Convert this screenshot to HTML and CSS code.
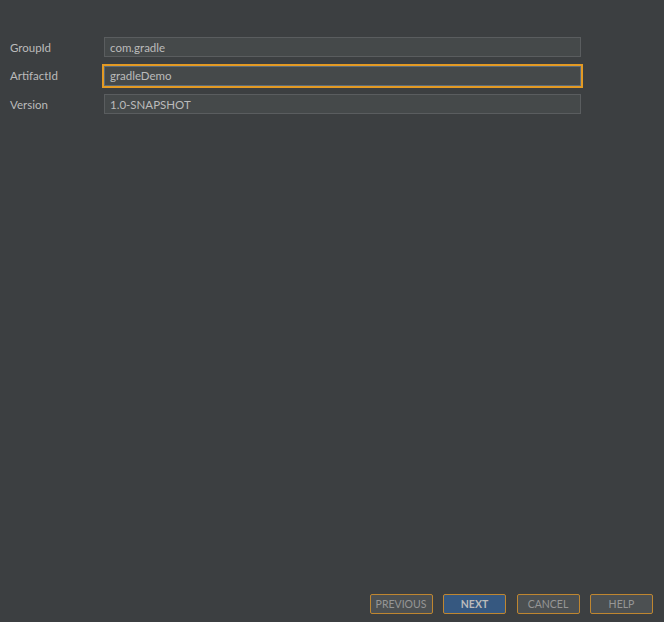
FILE: index.html
```html
<!DOCTYPE html>
<html>
<head>
<meta charset="utf-8">
<link rel="stylesheet" href="styles.css">
</head>
<body>
<div class="page">
  <div class="form">
    <label class="label">GroupId</label>
    <div class="field">com.gradle</div>
    <label class="label">ArtifactId</label>
    <div class="field focused">gradleDemo</div>
    <label class="label">Version</label>
    <div class="field">1.0-SNAPSHOT</div>
  </div>
  <div class="buttons">
    <button class="btn">PREVIOUS</button>
    <button class="btn primary">NEXT</button>
    <button class="btn">CANCEL</button>
    <button class="btn">HELP</button>
  </div>
</div>
</body>
</html>
```

FILE: styles.css
```css
html, body {
  margin: 0;
  padding: 0;
  background: #3c3f41;
}
.page {
  width: 664px;
  height: 622px;
  display: flex;
  flex-direction: column;
  justify-content: space-between;
  font-family: Lato, "Noto Sans", sans-serif;
  font-size: 11.5px;
  color: #bbbbbb;
  box-sizing: border-box;
  padding: 37px 11px 8px 10px;
}
.form {
  display: grid;
  grid-template-columns: 94px 477px;
  grid-auto-rows: 20px;
  row-gap: 8.5px;
}
.label {
  display: flex;
  align-items: center;
  color: #bbbbbb;
}
.field {
  box-sizing: border-box;
  height: 20px;
  background: #45494a;
  border: 1px solid #5a5d5f;
  display: flex;
  align-items: center;
  padding-left: 5px;
  color: #bbbbbb;
}
.field.focused {
  border-color: #5b6b7a;
  outline: 2px solid #e39a24;
  outline-offset: 0;
}
.buttons {
  display: flex;
  justify-content: flex-end;
  gap: 10.5px;
}
.btn {
  box-sizing: border-box;
  width: 63px;
  height: 20px;
  padding: 0;
  background: #4c5052;
  border: 1px solid #bf8630;
  border-radius: 2px;
  color: #969696;
  font-family: Lato, "Noto Sans", sans-serif;
  font-size: 10.5px;
  display: flex;
  align-items: center;
  justify-content: center;
}
.btn.primary {
  background: #365880;
  color: #bbbbbb;
  font-weight: bold;
}
```
